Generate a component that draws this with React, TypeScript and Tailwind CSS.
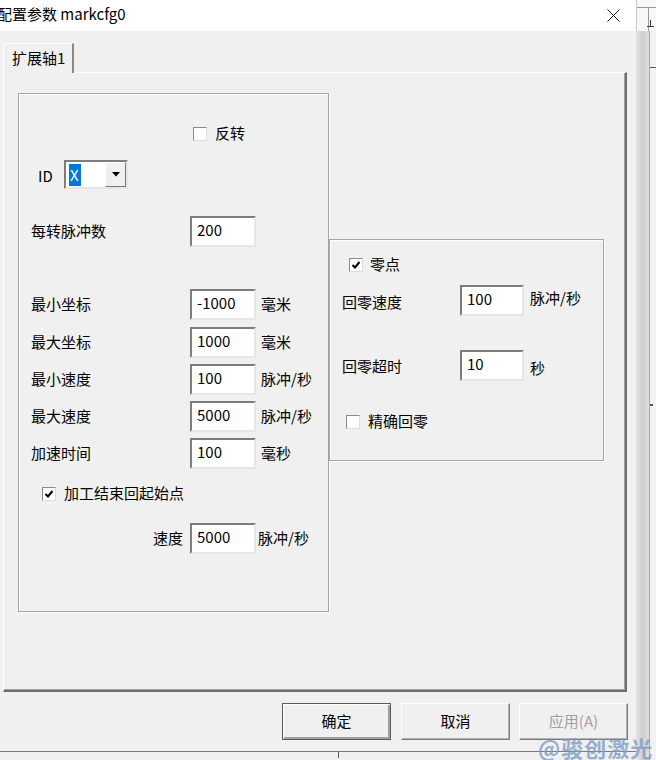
import type { ReactNode } from 'react';

const FONT = { fontFamily: '"Noto Sans CJK SC", "Noto Sans", sans-serif' };

// sunken edit box, classic win32 look
const Edit = ({ value, w = 'w-[66px]' }: { value: string; w?: string }) => (
  <div
    className={`${w} h-[31px] shrink-0 bg-white border-2 border-t-[#7d7d7d] border-l-[#7d7d7d] border-b-[#e6e6e6] border-r-[#e6e6e6] pl-[5px] pb-[3px] flex items-center text-[15px] text-black`}
  >
    {value}
  </div>
);

const Check = ({ checked = false }: { checked?: boolean }) => (
  <div className="w-[14px] h-[14px] shrink-0 bg-white border border-t-[#8a8a8a] border-l-[#8a8a8a] border-b-[#dcdcdc] border-r-[#dcdcdc] flex items-center justify-center">
    {checked && (
      <svg width="10" height="10" viewBox="0 0 10 10">
        <path d="M1.5 5 L4 7.5 L8.5 2" fill="none" stroke="#000" strokeWidth="2" />
      </svg>
    )}
  </div>
);

const Row = ({
  label,
  value,
  unit,
  mt,
  right = false,
}: {
  label: string;
  value: string;
  unit?: string;
  mt: string;
  right?: boolean;
}) => (
  <div className={`${mt} flex items-center h-[31px]`}>
    <div className={`w-[171px] shrink-0 pl-[12px] pb-[1px] ${right ? 'text-right pr-[7px]' : ''}`}>{label}</div>
    <Edit value={value} />
    {unit && <div className={`${right ? 'ml-[2px]' : 'ml-[5px]'} pb-[1px]`}>{unit}</div>}
  </div>
);

const Button = ({ children, def = false, disabled = false, ml }: { children: ReactNode; def?: boolean; disabled?: boolean; ml: string }) => (
  <div
    className={`${ml} h-[37px] w-[109px] shrink-0 flex items-center justify-center text-[15px] bg-[#f0f0f0] border ${
      def
        ? 'border-[#5a5a5a] shadow-[inset_1px_1px_0_#fff,inset_-2px_-2px_0_#a0a0a0]'
        : 'border-t-white border-l-white border-b-[#7a7a7a] border-r-[#7a7a7a] shadow-[inset_-1px_-1px_0_#b4b4b4]'
    } ${disabled ? 'text-[#a0a0a0]' : 'text-black'}`}
  >
    {children}
  </div>
);

export default function App() {
  return (
    <div className="w-[656px] h-[760px] overflow-hidden relative flex bg-[#f0f0f0] text-[15px] text-black" style={FONT}>
      {/* dialog */}
      <div className="w-[636px] shrink-0 flex flex-col">
        <div className="h-[752px] flex flex-col border-b border-[#7a7a7a]">
          {/* title bar */}
          <div className="h-[31px] bg-white flex items-center justify-between pr-[16px]">
            <span className="-ml-[3px] pb-[2px] text-[15px]">配置参数 markcfg0</span>
            <svg width="13" height="13" viewBox="0 0 13 13">
              <path d="M0.5 0.5 L12.5 12.5 M12.5 0.5 L0.5 12.5" stroke="#111" strokeWidth="1" />
            </svg>
          </div>

          <div className="flex-1 px-[3px] pt-[12px]">
            {/* tab strip */}
            <div className="flex h-[29px]">
              <div className="w-[71px] h-[30px] border-t border-l border-t-white border-l-white border-r-2 border-r-[#8a8a8a] rounded-tl-[2px] pl-[8px] pt-[3px] bg-[#f0f0f0] relative z-10">
                扩展轴1
              </div>
            </div>

            {/* tab page */}
            <div className="w-[624px] h-[620px] border-t border-l border-t-white border-l-white border-r-2 border-b-2 border-r-[#6e6e6e] border-b-[#6e6e6e] shadow-[inset_-1px_-1px_0_#a0a0a0] pl-[14px] pt-[20px] flex items-start">
              {/* axis group */}
              <div className="w-[311px] h-[519px] shrink-0 border border-[#a5a5a5] shadow-[inset_1px_1px_0_#fff,1px_1px_0_#fff] flex flex-col">
                <div className="mt-[32px] ml-[174px] h-[16px] flex items-center gap-[8px]">
                  <Check />
                  <span className="pb-[1px]">反转</span>
                </div>

                <div className="mt-[18px] flex items-center h-[29px]">
                  <span className="ml-[19px] w-[26px] pt-[4px]">ID</span>
                  <div className="w-[64px] h-[29px] bg-white border-2 border-t-[#7d7d7d] border-l-[#7d7d7d] border-b-[#e6e6e6] border-r-[#e6e6e6] flex items-stretch">
                    <div className="flex-1 pl-[3px] py-[1px] flex items-center">
                      <span className="bg-[#0078d7] text-white px-[1px] leading-[22px] w-[12px]">X</span>
                    </div>
                    <div className="w-[21px] bg-[#f0f0f0] border border-t-white border-l-white border-b-[#7a7a7a] border-r-[#7a7a7a] flex items-center justify-center">
                      <svg width="8" height="5" viewBox="0 0 8 5">
                        <path d="M0 0 H8 L4 4.5 Z" fill="#000" />
                      </svg>
                    </div>
                  </div>
                </div>

                <Row mt="mt-[27px]" label="每转脉冲数" value="200" />
                <Row mt="mt-[42px]" label="最小坐标" value="-1000" unit="毫米" />
                <Row mt="mt-[7px]" label="最大坐标" value="1000" unit="毫米" />
                <Row mt="mt-[6px]" label="最小速度" value="100" unit="脉冲/秒" />
                <Row mt="mt-[6px]" label="最大速度" value="5000" unit="脉冲/秒" />
                <Row mt="mt-[6px]" label="加速时间" value="100" unit="毫秒" />

                <div className="mt-[17px] ml-[23px] h-[16px] flex items-center gap-[8px]">
                  <Check checked />
                  <span className="pb-[1px]">加工结束回起始点</span>
                </div>

                <Row mt="mt-[21px]" label="速度" value="5000" unit="脉冲/秒" right />
              </div>

              {/* home group */}
              <div className="w-[275px] h-[222px] mt-[146px] shrink-0 border border-[#a5a5a5] shadow-[inset_1px_1px_0_#fff,1px_1px_0_#fff] flex flex-col">
                <div className="mt-[17px] ml-[19px] h-[16px] flex items-center gap-[7px]">
                  <Check checked />
                  <span className="pb-[1px]">零点</span>
                </div>
                <div className="mt-[12px] flex items-center h-[31px]">
                  <span className="w-[130px] pl-[12px] pt-[3px]">回零速度</span>
                  <Edit value="100" w="w-[64px]" />
                  <span className="ml-[6px] pb-[4px]">脉冲/秒</span>
                </div>
                <div className="mt-[34px] flex items-center h-[31px]">
                  <span className="w-[130px] pl-[12px] pt-[1px]">回零超时</span>
                  <Edit value="10" w="w-[64px]" />
                  <span className="ml-[6px] pt-[5px]">秒</span>
                </div>
                <div className="mt-[33px] ml-[16px] h-[16px] flex items-center gap-[8px]">
                  <Check />
                  <span className="pb-[1px]">精确回零</span>
                </div>
              </div>
            </div>

            {/* buttons */}
            <div className="mt-[11px] flex">
              <Button ml="ml-[279px]" def>
                确定
              </Button>
              <Button ml="ml-[10px]">取消</Button>
              <Button ml="ml-[9px]" disabled>
                应用(A)
              </Button>
            </div>
          </div>
        </div>
        <div className="flex-1 relative">
          <div className="ml-[338px] w-px h-[6px] bg-[#555]" />
        </div>
      </div>

      {/* window behind, on the right */}
      <div className="flex-1 flex flex-col">
        <div className="h-[31px] bg-[#f7f7f7] border-l border-[#c8c8c8] flex">
          <div className="w-[12px] mt-[7px] border-t border-r border-[#9a9a9a]" />
          <div className="flex-1 mt-[7px] border-t border-[#9a9a9a] relative">
            <div className="absolute left-[1px] top-[12px] w-[1px] h-[6px] bg-[#333]" />
            <div className="absolute left-[-2px] top-[18px] w-[7px] h-[1px] bg-[#333]" />
          </div>
        </div>
        <div className="flex-1 flex">
          <div className="w-[13px] bg-gradient-to-r from-[#e6e6e6] via-[#cdcdcd] to-[#e0e0e0]" />
          <div className="w-px bg-[#a8a8a8]" />
          <div className="flex-1 bg-[#f2f2f2] flex flex-col">
            <div className="mt-[36px] h-px bg-[#555]" />
            <div className="mt-[336px] w-[3px] h-[2px] bg-[#555]" />
          </div>
        </div>
      </div>

      {/* watermark */}
      <div className="absolute left-[538px] top-[731px] text-[22px] font-bold text-[#7e9cc4]/80 tracking-[1px]">
        @骏创激光
      </div>
    </div>
  );
}
